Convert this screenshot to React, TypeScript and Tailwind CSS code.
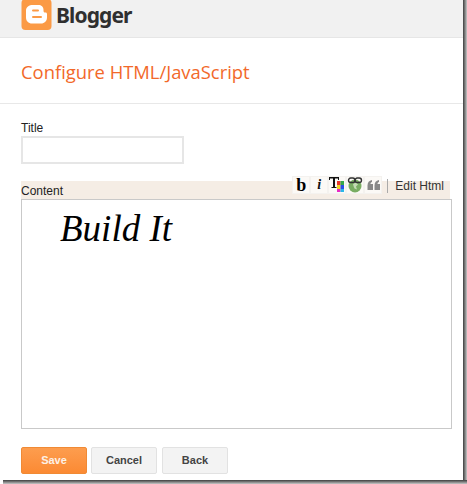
export default function App() {
  const arial = "font-['Liberation_Sans',Arial,sans-serif]";
  const toolBox = "w-[18px] h-[18px] flex items-center justify-center border border-[#f4f2ef] bg-[#fbf9f6]";
  const button =
    "w-[66px] h-[27px] rounded-[2px] border text-[11px] font-bold flex items-center justify-center " + arial;
  return (
    <div className="w-[467px] h-[484px] flex flex-col overflow-hidden bg-white">
      <div className="flex h-[480px]">
        <div className="w-[463px] h-[480px] flex flex-col bg-white">
          <header className="h-[38px] shrink-0 bg-[#f1f1f1] border-b border-[#e6e6e6] flex items-start pl-[21px] overflow-hidden">
            <svg width="31" height="31" viewBox="0 0 31 31" className="-mt-px shrink-0">
              <rect x="0.5" y="0" width="30" height="31" rx="4" fill="#fb9a45" />
              <path
                d="M12 6h5.500c2.800 0 5 2 5 4.800v1.200c0 .9.600 1.500 1.500 1.500h.5c.9 0 1.500.6 1.500 1.500v3.500c0 3.500-2.500 6-6 6H11c-3.500 0-6-2.500-6-6v-7c0-3.500 3-5.500 7-5.500z"
                fill="#fff"
              />
              <rect x="11" y="10.500" width="7" height="2" rx="1" fill="#fb9a45" />
              <rect x="11" y="17" width="10" height="2" rx="1" fill="#fb9a45" />
            </svg>
            <span className="ml-[4px] text-[#2f2f2f] font-['Noto_Sans',sans-serif] font-bold text-[21px] leading-[30px] tracking-[-0.9px]">
              Blogger
            </span>
          </header>
          <div className="h-[66px] shrink-0 border-b border-[#e8e8e8] flex items-center pl-[21px]">
            <h1 className="font-['Open_Sans',sans-serif] text-[18.400px] leading-[24px] text-[#f2692a] mt-[2px]">
              Configure HTML/JavaScript
            </h1>
          </div>
          <main className={"flex-1 flex flex-col pl-[21px] text-[#222] text-[12px] " + arial}>
            <label className="mt-[17px] leading-[14px] h-[15px]">Title</label>
            <div className="w-[163px] h-[28px] border-2 border-[#e6e6e6] bg-white" />
            <div className="mt-[17px] w-[429px] h-[18px] bg-[#f5ede5] flex justify-between">
              <span className="mt-[3px] leading-[14px]">Content</span>
              <div className="flex items-center h-[18px] -mt-[5px] pr-[6px]">
                <div className={toolBox}>
                  <span className="font-['Liberation_Serif',serif] font-bold text-[18px] leading-none text-black">b</span>
                </div>
                <div className={toolBox}>
                  <span className="font-['Liberation_Serif',serif] font-bold italic text-[14px] leading-none text-[#111]">i</span>
                </div>
                <div className={toolBox}>
                  <svg width="16" height="16" viewBox="0 0 16 16" className="shrink-0">
                    <path d="M0 0h10v3H9V1.500H6V10h1.500v1h-5v-1H4V1.500H1V3H0z" fill="#111" />
                    <rect x="8" y="4" width="3.500" height="4" fill="#e8352a" />
                    <rect x="11.500" y="4" width="3.500" height="4" fill="#35a84a" />
                    <rect x="8" y="8" width="3.500" height="4" fill="#f2d21f" />
                    <rect x="11.500" y="8" width="3.500" height="4" fill="#2a4de8" />
                    <rect x="8" y="12" width="3.500" height="3" fill="#e82ac4" />
                    <rect x="11.500" y="12" width="3.500" height="3" fill="#2ab8e8" />
                  </svg>
                </div>
                <div className={toolBox}>
                  <svg width="16" height="16" viewBox="0 0 16 16" className="shrink-0">
                    <circle cx="8" cy="9" r="6.500" fill="#79ad62" />
                    <path d="M6 7l3-1.500 2 2-2 2 1 3-2.500-1-1-2.500z" fill="#c4dcb4" />
                    <rect x="1.500" y="1" width="6.500" height="4.500" rx="2.200" fill="none" stroke="#333" strokeWidth="1.400" />
                    <rect x="8" y="1" width="6.500" height="4.500" rx="2.200" fill="none" stroke="#333" strokeWidth="1.400" />
                  </svg>
                </div>
                <div className={toolBox}>
                  <svg width="15" height="12" viewBox="0 0 14 12">
                    <path d="M1 11V6.500C1 3.500 2.500 1.500 5.500 1v2C4.500 3.300 4 4 4 5h2.500v6zM8 11V6.500C8 3.500 9.500 1.500 12.500 1v2c-1 .3-1.500 1-1.500 2h2.500v6z" fill="#888" />
                  </svg>
                </div>
                <div className="w-px h-[14px] bg-[#aaa] ml-[5px] mr-[7px] mt-[2px]" />
                <span className="text-[#333] leading-[14px] mt-[2px]">Edit Html</span>
              </div>
            </div>
            <div className="w-[431px] h-[230px] border border-[#c9c9c9] bg-white flex flex-col pl-[38px] pt-[7px]">
              <span className="font-['Liberation_Serif',serif] italic text-[37px] leading-[44px] text-black">
                Build It
              </span>
            </div>
            <div className="flex mt-[18px] gap-[4px]">
              <button className={button + " border-[#f08a35] bg-gradient-to-b from-[#fd9d4e] to-[#fb8a33] text-[#fdf1e6]"}>Save</button>
              <button className={button + " border-[#e2e2e2] bg-[#f3f3f3] text-[#444]"}>Cancel</button>
              <button className={button + " border-[#e2e2e2] bg-[#f3f3f3] text-[#444] ml-[1px]"}>Back</button>
            </div>
          </main>
        </div>
        <div className="w-[4px] bg-gradient-to-r from-[#3f3f3f] to-[#c8c8c8]" />
      </div>
      <div className="h-[4px] ml-[3px] bg-gradient-to-b from-[#3f3f3f] to-[#c8c8c8]" />
    </div>
  );
}
